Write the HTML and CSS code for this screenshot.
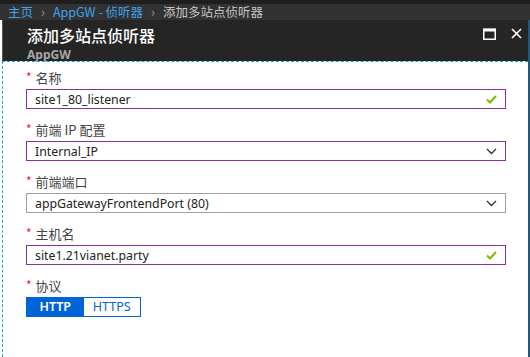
FILE: index.html
```html
<!DOCTYPE html>
<html lang="zh-CN">
<head>
    <meta charset="UTF-8">
    <title>添加多站点侦听器</title>
    <link rel="stylesheet" href="styles.css">
</head>
<body>
    <!-- 面包屑 -->
    <div class="crumbs">
        <a href="#">主页</a>
        <span class="sep">›</span>
        <a href="#">AppGW - 侦听器</a>
        <span class="sep">›</span>
        <span class="current">添加多站点侦听器</span>
    </div>

    <div class="blade">
        <div class="blade-head">
            <div class="titles">
                <h1>添加多站点侦听器</h1>
                <div class="sub">AppGW</div>
            </div>
            <div class="ctrls">
                <svg class="max" width="13" height="12" viewBox="0 0 13 12"><rect x="0.75" y="1.5" width="11.5" height="9.75" fill="none" stroke="#fff" stroke-width="1.5"/><rect x="0" y="0.5" width="13" height="3" fill="#fff"/></svg>
                <svg class="close" width="11" height="11" viewBox="0 0 11 11"><path d="M1 1 L10 10 M10 1 L1 10" stroke="#fff" stroke-width="1.6"/></svg>
            </div>
        </div>

        <div class="blade-body">
            <div class="field">
                <label><span class="req">*</span>名称</label>
                <div class="box ok">
                    <span class="val">site1_80_listener</span>
                    <svg width="11" height="9" viewBox="0 0 11 9"><path d="M1 4.5 L4 7.5 L10 1" fill="none" stroke="#7fba00" stroke-width="2"/></svg>
                </div>
            </div>

            <div class="field">
                <label><span class="req">*</span>前端 IP 配置</label>
                <div class="box ok">
                    <span class="val">Internal_IP</span>
                    <svg width="11" height="7" viewBox="0 0 11 7"><path d="M1 1 L5.5 5.5 L10 1" fill="none" stroke="#333" stroke-width="1.3"/></svg>
                </div>
            </div>

            <div class="field">
                <label><span class="req">*</span>前端端口</label>
                <div class="box">
                    <span class="val">appGatewayFrontendPort (80)</span>
                    <svg width="11" height="7" viewBox="0 0 11 7"><path d="M1 1 L5.5 5.5 L10 1" fill="none" stroke="#333" stroke-width="1.3"/></svg>
                </div>
            </div>

            <div class="field">
                <label><span class="req">*</span>主机名</label>
                <div class="box ok">
                    <span class="val">site1.21vianet.party</span>
                    <svg width="11" height="9" viewBox="0 0 11 9"><path d="M1 4.5 L4 7.5 L10 1" fill="none" stroke="#7fba00" stroke-width="2"/></svg>
                </div>
            </div>

            <div class="field">
                <label><span class="req">*</span>协议</label>
                <div class="toggle">
                    <span class="opt on">HTTP</span>
                    <span class="opt">HTTPS</span>
                </div>
            </div>
        </div>
    </div>
</body>
</html>
```

FILE: styles.css
```css
/* 全局 */
body {
    margin: 0;
    width: 530px;
    height: 357px;
    overflow: hidden;
    background: #fff;
    font-family: "Noto Sans", "Noto Sans CJK SC", sans-serif;
}

.crumbs {
    height: 16px;
    border-top: 4px solid #1e1e1e;
    background: #323232;
    padding-left: 8px;
    display: flex;
    align-items: center;
    gap: 8px;
    font-family: "Noto Sans CJK SC", sans-serif;
    font-size: 12.5px;
    line-height: 16px;
}

.crumbs a {
    color: #3fa2f0;
    text-decoration: none;
}

.crumbs .sep {
    color: #9a9a9a;
    font-size: 13px;
}

.crumbs .current {
    color: #c6c6c6;
}

.blade {
    margin-left: 2px;
    width: 526px;
    height: 337px;
    border-right: 2px solid #1f5a7c;
    display: flex;
    flex-direction: column;
}

.blade-head {
    height: 41px;
    flex: none;
    background: #252525;
    border-left: 1px solid #555;
    display: flex;
    justify-content: space-between;
    padding: 0 6px 0 24px;
}

.blade-head h1 {
    margin: 5px 0 0;
    font-family: "Noto Sans CJK SC", sans-serif;
    font-size: 16px;
    font-weight: 500;
    line-height: 20px;
    height: 20px;
    color: #fff;
}

.blade-head .sub {
    margin-top: 3px;
    font-size: 12px;
    font-weight: 700;
    line-height: 13px;
    color: #a6a6a6;
}

.ctrls {
    display: flex;
    gap: 15px;
    padding-top: 8px;
}

.blade-body {
    flex: 1;
    border-top: 1px dashed #1ba1e2;
    border-left: 1px dashed #1ba1e2;
    padding: 8px 22px 0 23px;
}

.field {
    margin-bottom: 13px;
}

.field label {
    display: block;
    height: 16px;
    margin-bottom: 3px;
    font-family: "Noto Sans CJK SC", sans-serif;
    font-size: 13px;
    line-height: 16px;
    color: #444;
}

.req {
    color: #e81123;
    font-size: 12px;
    margin-right: 4px;
    position: relative;
    top: -1px;
}

.box {
    height: 18px;
    border: 1px solid #a0a0a0;
    display: flex;
    align-items: center;
    justify-content: space-between;
    padding: 0 8px 0 8px;
}

.box.ok {
    border-color: #8b2ba8;
}

.box .val {
    font-size: 12.3px;
    color: #222;
}

.toggle {
    display: flex;
    width: 113px;
    height: 18px;
    margin-top: 2px;
    border: 1px solid #0063d8;
}

.toggle .opt {
    flex: 1;
    text-align: center;
    font-size: 12.5px;
    line-height: 18px;
    color: #0063d8;
}

.toggle .opt.on {
    background: #0063d8;
    color: #fff;
    font-weight: 600;
}
```
